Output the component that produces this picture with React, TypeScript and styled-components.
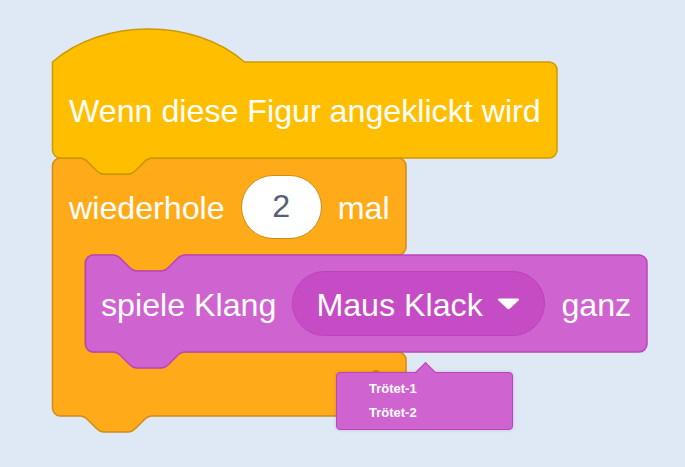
import React from "react";
import styled, { createGlobalStyle } from "styled-components";

const GlobalStyle = createGlobalStyle`
  html, body { margin: 0; padding: 0; background: #dfe9f5; }
  body { font-family: "Liberation Sans", Arial, sans-serif; }
`;

const Canvas = styled.div`
  position: relative;
  width: 685px;
  height: 467px;
  overflow: hidden;
  background: #dfe9f5;
`;

const ShapeLayer = styled.svg`
  position: absolute;
  inset: 0;
  width: 685px;
  height: 467px;
`;

const Script = styled.div`
  position: absolute;
  left: 52px;
  top: 28px;
  display: flex;
  flex-direction: column;
  z-index: 1;
`;

const Row = styled.div<{ $height: number; $indent: number; $top?: number }>`
  display: flex;
  align-items: center;
  gap: 16px;
  height: ${(p) => p.$height}px;
  margin-top: ${(p) => p.$top ?? 0}px;
  padding-left: ${(p) => p.$indent}px;
  padding-top: 3px;
  box-sizing: border-box;
`;

const Label = styled.span`
  font-family: "Liberation Sans", Arial, sans-serif;
  font-size: 32.2px;
  line-height: 1;
  color: #ffffff;
  white-space: nowrap;
`;

const NumberInput = styled.div`
  box-sizing: border-box;
  width: 81px;
  height: 64px;
  border-radius: 32px;
  background: #ffffff;
  border: 1.5px solid #cf8b17;
  display: flex;
  align-items: center;
  justify-content: center;
  font-family: "Liberation Sans", Arial, sans-serif;
  font-size: 32.2px;
  color: #575e75;
  margin-top: -3px;
`;

const DropdownField = styled.div`
  box-sizing: border-box;
  width: 253px;
  height: 65px;
  border-radius: 33px;
  background: #c54cc5;
  border: 1.5px solid #bd42bd;
  display: flex;
  align-items: center;
  gap: 14px;
  padding-left: 23px;
  padding-top: 3px;
  margin-top: -3px;
`;

const Arrow = styled.svg`
  width: 23px;
  height: 12px;
  flex: none;
  margin-top: -3px;
`;

const BottomArm = styled.div`
  height: 64px;
`;

const Menu = styled.div`
  position: absolute;
  left: 336px;
  top: 372px;
  width: 177px;
  height: 58px;
  box-sizing: border-box;
  background: #cf63cf;
  border: 1px solid #bd42bd;
  border-radius: 4px;
  box-shadow: 0 0 3px 1px rgba(0, 0, 0, 0.1);
  display: flex;
  flex-direction: column;
  padding: 6px 0 0 32px;
  gap: 5px;
  z-index: 2;
`;

const MenuPointer = styled.div`
  position: absolute;
  left: 81px;
  top: -8px;
  width: 14px;
  height: 14px;
  background: #cf63cf;
  border-top: 1px solid #bd42bd;
  border-left: 1px solid #bd42bd;
  transform: rotate(45deg);
`;

const MenuItem = styled.div`
  position: relative;
  font-family: "Liberation Sans", Arial, sans-serif;
  font-weight: bold;
  font-size: 13px;
  line-height: 19px;
  color: #ffffff;
`;

const notchRight = "c4,0 6,2 8,4 l8,8 c2,2 4,4 8,4 h24 c4,0 6,-2 8,-4 l8,-8 c2,-2 4,-4 8,-4";
const notchLeft = "c-4,0 -6,2 -8,4 l-8,8 c-2,2 -4,4 -8,4 h-24 c-4,0 -6,-2 -8,-4 l-8,-8 c-2,-2 -4,-4 -8,-4";

const hatPath = `M52.5,62 c50,-44 142,-44 192,0 H549 a8,8 0 0 1 8,8 V150 a8,8 0 0 1 -8,8 H152 ${notchLeft} H60.5 a8,8 0 0 1 -8,-8 Z`;

const repeatPath = `M52.5,166 a8,8 0 0 1 8,-8 H80 ${notchRight} H398 a8,8 0 0 1 8,8 V247 a8,8 0 0 1 -8,8 H185 ${notchLeft} H93 a8,8 0 0 0 -8,8 V344 a8,8 0 0 0 8,8 H398 a8,8 0 0 1 8,8 V408 a8,8 0 0 1 -8,8 H152 ${notchLeft} H60.5 a8,8 0 0 1 -8,-8 Z`;

const soundPath = `M85.5,263 a8,8 0 0 1 8,-8 H113 ${notchRight} H639 a8,8 0 0 1 8,8 V344 a8,8 0 0 1 -8,8 H185 ${notchLeft} H93.5 a8,8 0 0 1 -8,-8 Z`;

export default function App() {
  return (
    <>
      <GlobalStyle />
      <Canvas>
        <ShapeLayer viewBox="0 0 685 467">
          <path d={repeatPath} fill="#ffab19" stroke="#cf8b17" strokeWidth={1.5} />
          <circle cx={376} cy={374} r={4} fill="#cf8b17" />
          <path d={hatPath} fill="#ffbf00" stroke="#cc9900" strokeWidth={1.5} />
          <path d={soundPath} fill="#cf63cf" stroke="#bd42bd" strokeWidth={1.5} />
        </ShapeLayer>
        <Script>
          <Row $height={96} $indent={17} $top={34}>
            <Label>Wenn diese Figur angeklickt wird</Label>
          </Row>
          <Row $height={97} $indent={17}>
            <Label>wiederhole</Label>
            <NumberInput>2</NumberInput>
            <Label>mal</Label>
          </Row>
          <Row $height={97} $indent={49}>
            <Label>spiele Klang</Label>
            <DropdownField>
              <Label>Maus Klack</Label>
              <Arrow viewBox="0 0 23 12">
                <path
                  d="M2.5,0.5 H20.5 Q23,0.5 21.5,2.5 L13,10.5 Q11.5,11.8 10,10.5 L1.5,2.5 Q0,0.5 2.5,0.5 Z"
                  fill="#ffffff"
                />
              </Arrow>
            </DropdownField>
            <Label>ganz</Label>
          </Row>
          <BottomArm />
        </Script>
        <Menu>
          <MenuPointer />
          <MenuItem>Trötet-1</MenuItem>
          <MenuItem>Trötet-2</MenuItem>
        </Menu>
      </Canvas>
    </>
  );
}
